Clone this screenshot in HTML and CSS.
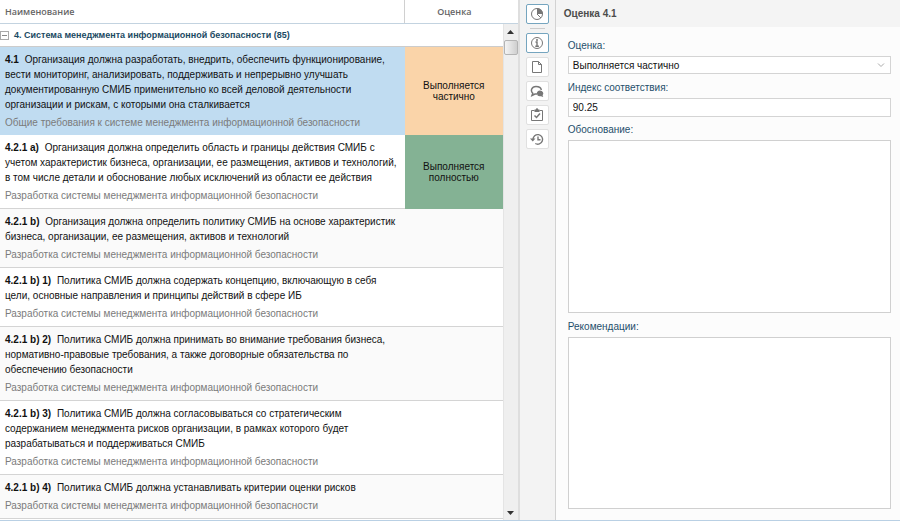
FILE: index.html
```html
<!DOCTYPE html>
<html lang="ru">
<head>
<meta charset="utf-8">
<title>Оценка СМИБ</title>
<link rel="stylesheet" href="styles.css">
</head>
<body>
<div class="app">
  <main class="list">
    <div class="list-head"><span class="head-name">Наименование</span><span class="head-mark">Оценка</span></div>
    <div class="list-body">
      <table class="grid">
        <colgroup><col><col class="col-mark"></colgroup>
        <tbody>
          <tr class="group"><th colspan="2"><button class="toggle" aria-label="Свернуть"></button>4. Система менеджмента информационной безопасности (85)</th></tr>
          <tr class="selected">
            <td><p><b>4.1</b> Организация должна разработать, внедрить, обеспечить функционирование,<br>вести мониторинг, анализировать, поддерживать и непрерывно улучшать<br>документированную СМИБ применительно ко всей деловой деятельности<br>организации и рискам, с которыми она сталкивается</p><p class="sub">Общие требования к системе менеджмента информационной безопасности</p></td>
            <td class="mark partial">Выполняется частично</td>
          </tr>
          <tr>
            <td><p><b>4.2.1 a)</b> Организация должна определить область и границы действия СМИБ с<br>учетом характеристик бизнеса, организации, ее размещения, активов и технологий,<br>в том числе детали и обоснование любых исключений из области ее действия</p><p class="sub">Разработка системы менеджмента информационной безопасности</p></td>
            <td class="mark full">Выполняется полностью</td>
          </tr>
          <tr class="alt">
            <td><p><b>4.2.1 b)</b> Организация должна определить политику СМИБ на основе характеристик<br>бизнеса, организации, ее размещения, активов и технологий</p><p class="sub">Разработка системы менеджмента информационной безопасности</p></td>
            <td></td>
          </tr>
          <tr>
            <td><p><b>4.2.1 b) 1)</b> Политика СМИБ должна содержать концепцию, включающую в себя<br>цели, основные направления и принципы действий в сфере ИБ</p><p class="sub">Разработка системы менеджмента информационной безопасности</p></td>
            <td></td>
          </tr>
          <tr class="alt">
            <td><p><b>4.2.1 b) 2)</b> Политика СМИБ должна принимать во внимание требования бизнеса,<br>нормативно-правовые требования, а также договорные обязательства по<br>обеспечению безопасности</p><p class="sub">Разработка системы менеджмента информационной безопасности</p></td>
            <td></td>
          </tr>
          <tr>
            <td><p><b>4.2.1 b) 3)</b> Политика СМИБ должна согласовываться со стратегическим<br>содержанием менеджмента рисков организации, в рамках которого будет<br>разрабатываться и поддерживаться СМИБ</p><p class="sub">Разработка системы менеджмента информационной безопасности</p></td>
            <td></td>
          </tr>
          <tr class="alt">
            <td><p><b>4.2.1 b) 4)</b> Политика СМИБ должна устанавливать критерии оценки рисков</p><p class="sub">Разработка системы менеджмента информационной безопасности</p></td>
            <td></td>
          </tr>
        </tbody>
      </table>
      <div class="scroll" aria-hidden="true">
        <svg class="arrow" viewBox="0 0 7 4"><path d="M0 4 3.500 0 7 4z"/></svg>
        <div class="thumb"></div>
        <svg class="arrow down" viewBox="0 0 7 4"><path d="M0 0h7L3.500 4z"/></svg>
      </div>
    </div>
  </main>
  <nav class="tools">
    <button class="tool active" aria-label="Диаграмма"><svg viewBox="0 0 14 14"><circle cx="7" cy="7" r="5.500"/><path class="fill" d="M7 1a6 6 0 0 1 6 6H7z"/><path d="M7 7l4 4"/></svg></button>
    <hr>
    <button class="tool active" aria-label="Сведения"><svg viewBox="0 0 14 14"><circle cx="7" cy="7" r="5.500"/><path d="M5.500 6H7v4M5.300 10.200h3.600" stroke-width="1.400"/><circle class="fill" cx="7" cy="3.900" r="1"/></svg></button>
    <button class="tool" aria-label="Документ"><svg viewBox="0 0 14 14"><path d="M2.500 1.500h6l3 3v8h-9zM8.500 1.500v3h3"/></svg></button>
    <button class="tool" aria-label="Обсуждение"><svg viewBox="0 0 14 14"><path d="M7 10H5L2 11.500l.8-2.200C.2 7 1.500 2.500 6 2.500c3 0 5 1.300 5.300 3.500" stroke-width="1.500"/><path class="fill" d="M10 6.500a3.300 2.900 0 0 1 2.600 4.700l.6 1.800-2.200-.8A3.300 2.900 0 1 1 10 6.500z"/></svg></button>
    <button class="tool" aria-label="Задачи"><svg viewBox="0 0 14 14"><path d="M4.500 2.500h-3v10h11v-10h-3"/><path class="fill" d="M4.500 1.500h1.300a1.200 1.200 0 0 1 2.400 0h1.300v2.500h-5z"/><path d="M4.500 7.500l2 2 3.500-4" stroke-width="1.500"/></svg></button>
    <button class="tool" aria-label="История"><svg viewBox="0 0 14 14"><path d="M3 7.500a4.800 4.800 0 1 1 2.300 4M8 4.500v3.300h2.500" stroke-width="1.400"/><path class="fill" d="M0 6.500h5.500L2.800 9.500z"/></svg></button>
  </nav>
  <aside class="panel">
    <h1>Оценка 4.1</h1>
    <form class="form">
      <label for="mark">Оценка:</label>
      <div class="select"><select id="mark"><option>Выполняется частично</option></select><svg viewBox="0 0 8 5"><path d="M1 .5 4 3.500 7 .5"/></svg></div>
      <label for="idx">Индекс соответствия:</label>
      <input id="idx" type="text" value="90.25">
      <label for="why">Обоснование:</label>
      <textarea id="why"></textarea>
      <label for="rec">Рекомендации:</label>
      <textarea id="rec"></textarea>
    </form>
  </aside>
</div>
</body>
</html>
```
FILE: styles.css
```css
* { box-sizing: border-box; }
body { margin: 0; font: 10px/15px "Liberation Sans", Arial, sans-serif; color: #111; }
button, input, select, textarea { font: inherit; color: inherit; margin: 0; }
.app { display: flex; height: 100vh; border-bottom: 1px solid #b9d0e4; overflow: hidden; }

.list { flex: 519 1 0; min-width: 0; display: flex; flex-direction: column; border-right: 2px solid #dedede; }
.list-head { display: flex; height: 24px; flex: none; border-bottom: 1px solid #c3d3e0; line-height: 23px; color: #666; font-size: 9px; font-family: "Open Sans", sans-serif; font-weight: 600; }
.head-name { flex: 1; padding-left: 5px; border-right: 1px solid #d0d0d0; }
.head-mark { width: 113px; padding-right: 14px; text-align: center; }
.list-body { flex: 1; min-height: 0; display: flex; align-items: flex-start; }
.grid { flex: 1; min-width: 0; border-collapse: separate; border-spacing: 0; table-layout: fixed; width: 100%; }
.col-mark { width: 98px; }
.group th { height: 23px; padding: 0; text-align: left; font-size: 9px; color: #1b4a63; border-bottom: 1px solid #ccc; }
.toggle { width: 9px; height: 9px; padding: 0; margin-right: 5px; border: 1px solid #aaa; background: linear-gradient(#888, #888) center / 5px 1px no-repeat #fff; vertical-align: -1px; }
.grid td { padding: 5px 0 5px 5px; border-bottom: 1px solid #d4d4d4; white-space: nowrap; vertical-align: top; }
.grid p { margin: 0; }
.grid b { margin-right: 3px; }
.grid .sub { margin-top: 3px; color: #7b7b7b; }
.alt { background: #fafafa; }
.selected { background: #c0dcf1; }
.grid .selected td { border-bottom: 0; }
.grid .mark { padding: 0 16px; text-align: center; vertical-align: middle; white-space: normal; line-height: 11px; }
.grid .partial { background: #fad4a9; }
.grid .full { background: #84b294; border-bottom-color: #84b294; }
.scroll { width: 15px; align-self: stretch; display: flex; flex-direction: column; align-items: center; padding: 6px 0 5px; background: #efefef; border-left: 1px solid #e4e4e4; }
.arrow { width: 7px; height: 4px; fill: #333; }
.thumb { width: 14px; height: 15px; margin-top: 6px; border: 1px solid #b4b4b4; border-radius: 2px; background: linear-gradient(90deg, #f4f4f4, #cfcfcf); }
.down { margin-top: auto; }

.tools { width: 35px; flex: none; display: flex; flex-direction: column; align-items: center; gap: 4px; padding-top: 4px; background: #f3f3f3; }
.tools hr { width: 15px; height: 1px; margin: 0; border: 0; background: #ccc; }
.tool { display: flex; align-items: center; justify-content: center; width: 23px; height: 20px; padding: 0; border: 1px solid #e0e0e0; border-radius: 2px; background: #fff; }
.tool.active { border-color: #75a5bf; }
.tool svg { width: 14px; height: 14px; fill: none; stroke: #777; stroke-width: 1; }
.tool .fill { fill: #777; stroke: none; }

.panel { flex: 345 1 0; min-width: 0; display: flex; flex-direction: column; border-left: 1px solid #d2d2d2; background: #fcfcfc; }
.panel h1 { margin: 0; height: 27px; padding-left: 8px; background: #f4f4f4; color: #4c4c4c; font: bold 10px/27px "Liberation Sans", Arial, sans-serif; }
.form { flex: 1; min-height: 0; display: flex; flex-direction: column; padding: 11px 9px 11px 12px; }
.form label { color: #1f4f6b; margin-bottom: 3px; }
.select { display: flex; align-items: center; height: 18px; margin-bottom: 6px; border: 1px solid #d4d4d4; background: #fff; }
.select select { flex: 1; height: 16px; padding: 0 0 0 4px; border: 0; background: none; appearance: none; }
.select svg { width: 8px; height: 5px; margin-right: 5px; fill: none; stroke: #aaa; }
.form input { height: 19px; margin-bottom: 5px; padding: 0 4px; border: 1px solid #d4d4d4; background: #fff; }
.form textarea { flex: 1; min-height: 0; margin-bottom: 6px; padding: 4px; border: 1px solid #d0d0d0; background: #fff; resize: none; }
.form textarea:last-child { margin-bottom: 0; }
```
